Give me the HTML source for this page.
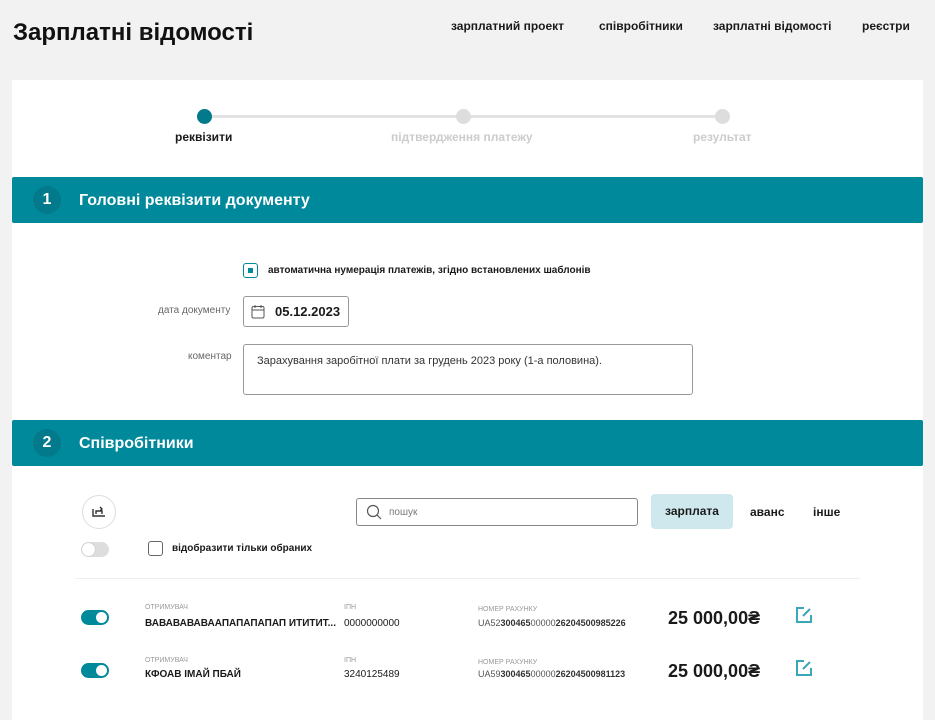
<!DOCTYPE html>
<html><head><meta charset="utf-8"><style>
*{margin:0;padding:0;box-sizing:border-box}
body{width:935px;height:699px;overflow:hidden;background:#f2f2f2;font-family:"Liberation Sans",sans-serif;color:#1a1a1a;position:relative}
.a{position:absolute;white-space:nowrap}
.title{left:13px;top:19px;font-size:24px;font-weight:bold;color:#111}
.nav{top:19px;font-size:12px;font-weight:bold}
.card{left:12px;top:80px;width:911px;height:640px;background:#fff}
.bar{left:12px;width:911px;height:46px;background:#00889b;border-radius:2px}
.num{width:28px;height:28px;border-radius:50%;background:#027a8b;color:#fff;font-weight:bold;font-size:16px;text-align:center;line-height:28px;left:21px;top:9px}
.bt{left:67px;top:15px;color:#fff;font-weight:bold;font-size:16px}
.dot{width:15px;height:15px;border-radius:50%;top:109px}
.lbl{font-size:10px;color:#666}
.sm{font-size:7px;color:#999}
.tog{width:28px;height:15px;border-radius:8px;background:#00889b}
.tog:after{content:"";position:absolute;right:2px;top:2px;width:11px;height:11px;border-radius:50%;background:#fff}
</style></head><body>
<div class="a title">Зарплатні відомості</div>
<div class="a nav" style="left:451px">зарплатний проект</div>
<div class="a nav" style="left:599px">співробітники</div>
<div class="a nav" style="left:713px">зарплатні відомості</div>
<div class="a nav" style="left:862px">реєстри</div>
<div class="a card"></div>
<div class="a" style="left:205px;top:115px;width:518px;height:3px;background:#e3e3e3"></div>
<div class="a dot" style="left:197px;background:#027a8b"></div>
<div class="a dot" style="left:456px;background:#ddd"></div>
<div class="a dot" style="left:715px;background:#ddd"></div>
<div class="a" style="left:175px;top:130px;font-size:12px;font-weight:bold">реквізити</div>
<div class="a" style="left:391px;top:130px;font-size:12px;font-weight:bold;color:#ccc">підтвердження платежу</div>
<div class="a" style="left:693px;top:130px;font-size:12px;font-weight:bold;color:#ccc">результат</div>
<div class="a bar" style="top:177px"><div class="a num">1</div><div class="a bt">Головні реквізити документу</div></div>
<div class="a" style="left:243px;top:263px;width:15px;height:15px;border:1.5px solid #00889b;border-radius:3px"><div class="a" style="left:4px;top:4px;width:5px;height:5px;background:#00889b"></div></div>
<div class="a" style="left:268px;top:265px;font-size:10px;font-weight:bold">автоматична нумерація платежів, згідно встановлених шаблонів</div>
<div class="a lbl" style="left:158px;top:305px">дата документу</div>
<div class="a" style="left:243px;top:296px;width:106px;height:31px;border:1px solid #999;border-radius:3px">
<svg class="a" style="left:7px;top:7px" width="14" height="15" viewBox="0 0 14 15"><rect x="1" y="2.5" width="12" height="11.5" rx="1.5" fill="none" stroke="#555"/><path d="M1 6h12M4 1v3M10 1v3" stroke="#555"/></svg>
<div class="a" style="left:31px;top:7px;font-size:13px;font-weight:bold">05.12.2023</div></div>
<div class="a lbl" style="left:188px;top:351px">коментар</div>
<div class="a" style="left:243px;top:344px;width:450px;height:51px;border:1px solid #999;border-radius:3px"><div class="a" style="left:13px;top:10px;font-size:11px;color:#333">Зарахування заробітної плати за грудень 2023 року (1-а половина).</div></div>
<div class="a bar" style="top:420px"><div class="a num">2</div><div class="a bt">Співробітники</div></div>
<div class="a" style="left:82px;top:495px;width:34px;height:34px;border-radius:50%;border:1px solid #ddd"><svg class="a" style="left:9px;top:10px" width="14" height="11" viewBox="0 0 14 11"><path d="M1 3v7h12M4 8V5h6V8M8 1l2 2-2 2" fill="none" stroke="#333" stroke-width="1.4"/></svg></div>
<div class="a" style="left:356px;top:498px;width:282px;height:28px;border:1px solid #888;border-radius:3px">
<svg class="a" style="left:9px;top:5px" width="16" height="16" viewBox="0 0 16 16"><circle cx="7" cy="7" r="5.5" fill="none" stroke="#555" stroke-width="1.2"/><path d="M11 11l4 4" stroke="#555" stroke-width="1.2"/></svg>
<div class="a" style="left:32px;top:8px;font-size:10px;color:#777">пошук</div></div>
<div class="a" style="left:651px;top:494px;width:82px;height:35px;background:#cfe8ee;border-radius:4px;font-size:12px;font-weight:bold;text-align:center;line-height:35px">зарплата</div>
<div class="a" style="left:750px;top:505px;font-size:12px;font-weight:bold">аванс</div>
<div class="a" style="left:813px;top:505px;font-size:12px;font-weight:bold">інше</div>
<div class="a" style="left:81px;top:542px;width:28px;height:15px;border-radius:8px;background:#ddd"><div class="a" style="left:1px;top:1px;width:13px;height:13px;border-radius:50%;background:#fff;box-shadow:0 0 1px #999"></div></div>
<div class="a" style="left:148px;top:541px;width:15px;height:15px;border:1.5px solid #666;border-radius:3px"></div>
<div class="a" style="left:172px;top:543px;font-size:10px;font-weight:bold">відобразити тільки обраних</div>
<div class="a" style="left:75px;top:578px;width:785px;height:1px;background:#eee"></div>
<div class="a tog" style="left:81px;top:610px"></div>
<div class="a sm" style="left:145px;top:604px">ОТРИМУВАЧ</div>
<div class="a" style="left:145px;top:618px;font-size:10px;font-weight:bold">ВАВАВАВАВААПАПАПАПАП ИТИТИТ...</div>
<div class="a sm" style="left:344px;top:604px">ІПН</div>
<div class="a" style="left:344px;top:618px;font-size:10px">0000000000</div>
<div class="a sm" style="left:478px;top:606px">НОМЕР РАХУНКУ</div>
<div class="a" style="left:478px;top:618px;font-size:9px;color:#555">UA52<b style="color:#333">300465</b>00000<b style="color:#333">26204500985226</b></div>
<div class="a" style="left:668px;top:608px;font-size:18px;font-weight:bold">25 000,00₴</div>
<svg class="a" style="left:795px;top:606px" width="18" height="18" viewBox="0 0 18 18"><path d="M9 2H2v14h14V9" fill="none" stroke="#3aa7b8" stroke-width="2"/><path d="M8 10l7-7" stroke="#3aa7b8" stroke-width="2"/></svg>
<div class="a tog" style="left:81px;top:663px"></div>
<div class="a sm" style="left:145px;top:657px">ОТРИМУВАЧ</div>
<div class="a" style="left:145px;top:669px;font-size:10px;font-weight:bold">КФОАВ ІМАЙ ПБАЙ</div>
<div class="a sm" style="left:344px;top:657px">ІПН</div>
<div class="a" style="left:344px;top:669px;font-size:10px">3240125489</div>
<div class="a sm" style="left:478px;top:659px">НОМЕР РАХУНКУ</div>
<div class="a" style="left:478px;top:669px;font-size:9px;color:#555">UA59<b style="color:#333">300465</b>00000<b style="color:#333">26204500981123</b></div>
<div class="a" style="left:668px;top:661px;font-size:18px;font-weight:bold">25 000,00₴</div>
<svg class="a" style="left:795px;top:659px" width="18" height="18" viewBox="0 0 18 18"><path d="M9 2H2v14h14V9" fill="none" stroke="#3aa7b8" stroke-width="2"/><path d="M8 10l7-7" stroke="#3aa7b8" stroke-width="2"/></svg>
</body></html>
